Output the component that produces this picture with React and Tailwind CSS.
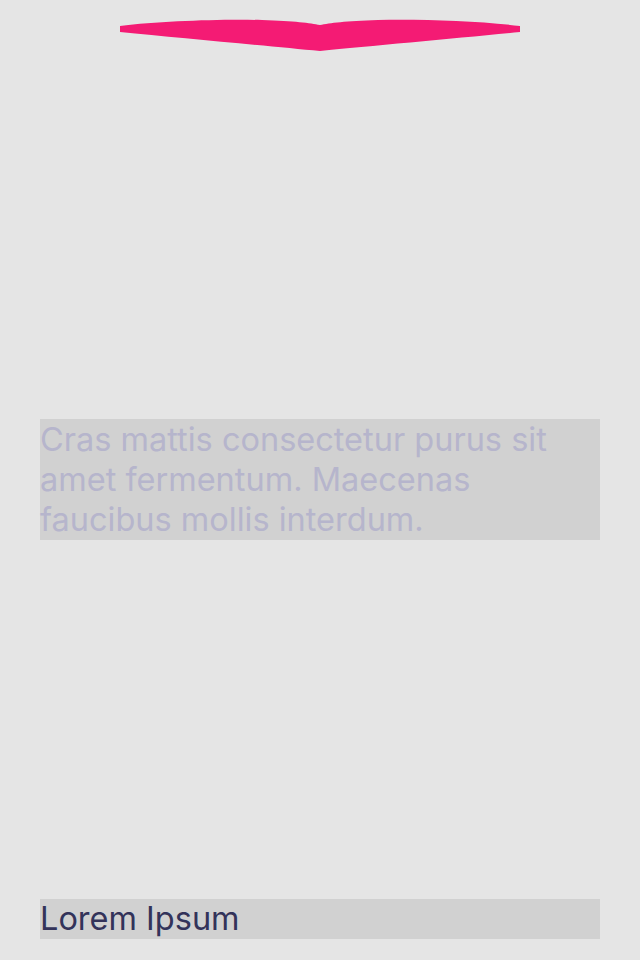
import React from 'react';

// Pink wing logo at the top
function Wing() {
    return (
        <svg width="400" height="34" viewBox="120 18 400 34" className="block">
            <path
                d="M120 26 C 160 21 220 19 262 20 C 295 21 310 23 320 25 C 330 23 345 21 378 20 C 420 19 480 21 520 26 L520 32 C 460 38 370 46 320 51 C 270 46 180 38 120 32 Z"
                fill="#f41b74"
            />
        </svg>
    );
}

export default function App() {
    return (
        <div className="h-[960px] w-[640px] bg-[#e5e5e5] px-10 flex flex-col" style={{ fontFamily: 'Inter, "Noto Sans", sans-serif' }}>
            <div className="flex justify-center pt-[18px]">
                <Wing />
            </div>

            <div className="mt-[367px] bg-[#d1d1d1] text-[32.5px] leading-[40px] text-[#b6b5cc] pt-px">
                Cras mattis consectetur purus sit amet fermentum. Maecenas faucibus mollis interdum.
            </div>

            <div className="mt-auto mb-[21px] bg-[#d1d1d1] text-[32.5px] leading-[40px] text-[#33335a]">
                Lorem Ipsum
            </div>
        </div>
    );
}
